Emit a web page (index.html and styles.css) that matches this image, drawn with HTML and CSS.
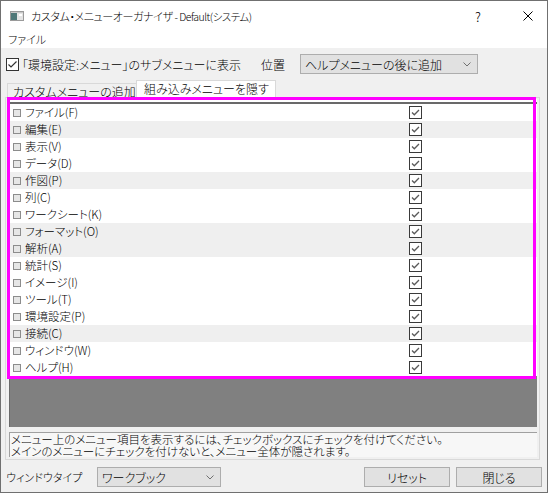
FILE: index.html
```html
<!DOCTYPE html>
<html lang="ja">
<head>
<meta charset="utf-8">
<title>カスタム・メニューオーガナイザ</title>
<link rel="stylesheet" href="styles.css">
</head>
<body>
<div class="window">
  <div class="titlebar">
    <svg class="app-icon" width="14" height="10" viewBox="0 0 14 10">
      <rect x="0.5" y="0.5" width="13" height="9" fill="#e4e4e4" stroke="#9a9a9a"/>
      <rect x="1" y="2" width="6" height="7" fill="#4f7878"/>
      <rect x="1" y="1" width="12" height="1" fill="#c8c8c8"/>
      <rect x="9" y="3" width="3" height="2" fill="#ffffff"/>
    </svg>
    <span class="title">カスタム・メニューオーガナイザ<span class="title-sub"> - Default(システム)</span></span>
    <span class="cap-btn help">?</span>
    <span class="cap-btn close">
      <svg width="10" height="10" viewBox="0 0 10 10"><path d="M0.5 0.5 L9.5 9.5 M9.5 0.5 L0.5 9.5" stroke="#000" stroke-width="1"/></svg>
    </span>
  </div>
  <div class="menubar"><span class="menu-item">ファイル</span></div>
  <div class="options">
    <span class="cb">
      <svg width="11" height="11" viewBox="0 0 11 11"><path d="M1.5 5.5 L4 8 L9.5 2.5" fill="none" stroke="#333" stroke-width="1.2"/></svg>
    </span>
    <span class="opt-label">「環境設定:メニュー」のサブメニューに表示</span>
    <span class="pos-label">位置</span>
    <div class="select select-pos">
      <span>ヘルプメニューの後に追加</span>
      <svg class="chev" width="8" height="5" viewBox="0 0 8 5"><path d="M0.5 0.5 L4 4 L7.5 0.5" fill="none" stroke="#707070" stroke-width="1"/></svg>
    </div>
  </div>
  <div class="tabs">
    <div class="tab">カスタムメニューの追加</div>
    <div class="tab active">組み込みメニューを隠す</div>
  </div>
  <div class="panel">
    <div class="list">
      <div class="rows">
        <div class="row"><span class="mini"></span><span class="name">ファイル(F)</span><span class="cb"><svg width="11" height="11" viewBox="0 0 11 11"><path d="M2 5.5 L4.3 7.8 L9 3" fill="none" stroke="#5a5a5a" stroke-width="1.3"/></svg></span></div>
        <div class="row alt"><span class="mini"></span><span class="name">編集(E)</span><span class="cb"><svg width="11" height="11" viewBox="0 0 11 11"><path d="M2 5.5 L4.3 7.8 L9 3" fill="none" stroke="#5a5a5a" stroke-width="1.3"/></svg></span></div>
        <div class="row"><span class="mini"></span><span class="name">表示(V)</span><span class="cb"><svg width="11" height="11" viewBox="0 0 11 11"><path d="M2 5.5 L4.3 7.8 L9 3" fill="none" stroke="#5a5a5a" stroke-width="1.3"/></svg></span></div>
        <div class="row"><span class="mini"></span><span class="name">データ(D)</span><span class="cb"><svg width="11" height="11" viewBox="0 0 11 11"><path d="M2 5.5 L4.3 7.8 L9 3" fill="none" stroke="#5a5a5a" stroke-width="1.3"/></svg></span></div>
        <div class="row alt"><span class="mini"></span><span class="name">作図(P)</span><span class="cb"><svg width="11" height="11" viewBox="0 0 11 11"><path d="M2 5.5 L4.3 7.8 L9 3" fill="none" stroke="#5a5a5a" stroke-width="1.3"/></svg></span></div>
        <div class="row"><span class="mini"></span><span class="name">列(C)</span><span class="cb"><svg width="11" height="11" viewBox="0 0 11 11"><path d="M2 5.5 L4.3 7.8 L9 3" fill="none" stroke="#5a5a5a" stroke-width="1.3"/></svg></span></div>
        <div class="row"><span class="mini"></span><span class="name">ワークシート(K)</span><span class="cb"><svg width="11" height="11" viewBox="0 0 11 11"><path d="M2 5.5 L4.3 7.8 L9 3" fill="none" stroke="#5a5a5a" stroke-width="1.3"/></svg></span></div>
        <div class="row alt"><span class="mini"></span><span class="name">フォーマット(O)</span><span class="cb"><svg width="11" height="11" viewBox="0 0 11 11"><path d="M2 5.5 L4.3 7.8 L9 3" fill="none" stroke="#5a5a5a" stroke-width="1.3"/></svg></span></div>
        <div class="row alt"><span class="mini"></span><span class="name">解析(A)</span><span class="cb"><svg width="11" height="11" viewBox="0 0 11 11"><path d="M2 5.5 L4.3 7.8 L9 3" fill="none" stroke="#5a5a5a" stroke-width="1.3"/></svg></span></div>
        <div class="row"><span class="mini"></span><span class="name">統計(S)</span><span class="cb"><svg width="11" height="11" viewBox="0 0 11 11"><path d="M2 5.5 L4.3 7.8 L9 3" fill="none" stroke="#5a5a5a" stroke-width="1.3"/></svg></span></div>
        <div class="row"><span class="mini"></span><span class="name">イメージ(I)</span><span class="cb"><svg width="11" height="11" viewBox="0 0 11 11"><path d="M2 5.5 L4.3 7.8 L9 3" fill="none" stroke="#5a5a5a" stroke-width="1.3"/></svg></span></div>
        <div class="row"><span class="mini"></span><span class="name">ツール(T)</span><span class="cb"><svg width="11" height="11" viewBox="0 0 11 11"><path d="M2 5.5 L4.3 7.8 L9 3" fill="none" stroke="#5a5a5a" stroke-width="1.3"/></svg></span></div>
        <div class="row"><span class="mini"></span><span class="name">環境設定(P)</span><span class="cb"><svg width="11" height="11" viewBox="0 0 11 11"><path d="M2 5.5 L4.3 7.8 L9 3" fill="none" stroke="#5a5a5a" stroke-width="1.3"/></svg></span></div>
        <div class="row alt"><span class="mini"></span><span class="name">接続(C)</span><span class="cb"><svg width="11" height="11" viewBox="0 0 11 11"><path d="M2 5.5 L4.3 7.8 L9 3" fill="none" stroke="#5a5a5a" stroke-width="1.3"/></svg></span></div>
        <div class="row"><span class="mini"></span><span class="name">ウィンドウ(W)</span><span class="cb"><svg width="11" height="11" viewBox="0 0 11 11"><path d="M2 5.5 L4.3 7.8 L9 3" fill="none" stroke="#5a5a5a" stroke-width="1.3"/></svg></span></div>
        <div class="row"><span class="mini"></span><span class="name">ヘルプ(H)</span><span class="cb"><svg width="11" height="11" viewBox="0 0 11 11"><path d="M2 5.5 L4.3 7.8 L9 3" fill="none" stroke="#5a5a5a" stroke-width="1.3"/></svg></span></div>
      </div>
      <div class="highlight"></div>
    </div>
    <div class="hint">
      <div>メニュー上のメニュー項目を表示するには、チェックボックスにチェックを付けてください。</div>
      <div>メインのメニューにチェックを付けないと、メニュー全体が隠されます。</div>
    </div>
  </div>
  <div class="footer">
    <span class="wt-label">ウィンドウタイプ</span>
    <div class="select select-wt">
      <span>ワークブック</span>
      <svg class="chev" width="8" height="5" viewBox="0 0 8 5"><path d="M0.5 0.5 L4 4 L7.5 0.5" fill="none" stroke="#707070" stroke-width="1"/></svg>
    </div>
    <span class="spacer"></span>
    <button class="btn">リセット</button>
    <button class="btn">閉じる</button>
  </div>
</div>
</body>
</html>
```

FILE: styles.css
```css
* { box-sizing: border-box; }

body {
  margin: 0;
  font-family: "Noto Sans CJK JP", "Noto Sans", sans-serif;
  font-size: 12px;
  font-weight: 300;
  color: #000;
  font-feature-settings: "palt";
}

.window {
  width: 548px;
  height: 493px;
  border: 1px solid #707070;
  background: #f0f0f0;
  display: flex;
  flex-direction: column;
  overflow: hidden;
}

.titlebar {
  height: 30px;
  flex: 0 0 30px;
  background: #fff;
  display: flex;
  align-items: center;
}

.app-icon { margin-left: 9px; flex: 0 0 auto; }

.title {
  margin-left: 7px;
  flex: 1;
  font-size: 11px;
  letter-spacing: -0.4px;
  white-space: nowrap;
}

.title-sub {
  font-size: 10.5px;
  letter-spacing: -0.5px;
}

.cap-btn {
  width: 46px;
  height: 30px;
  display: flex;
  align-items: center;
  justify-content: center;
}

.help { font-size: 13px; padding-top: 1px; }
.close { padding-left: 8px; }

.menubar {
  height: 17px;
  flex: 0 0 17px;
  background: #fff;
  font-size: 11px;
  line-height: 17px;
  padding-left: 7px;
}

.options {
  height: 31px;
  flex: 0 0 31px;
  display: flex;
  align-items: center;
  padding-left: 5px;
  padding-top: 1px;
}

.cb {
  width: 13px;
  height: 13px;
  flex: 0 0 13px;
  border: 1px solid #333;
  background: #fff;
  display: flex;
  align-items: center;
  justify-content: center;
}

.opt-label {
  margin-left: 3px;
  width: 239px;
  white-space: nowrap;
}

.pos-label { width: 39px; }

.select {
  height: 20px;
  border: 1px solid #adadad;
  background: #e1e1e1;
  display: flex;
  align-items: center;
  justify-content: space-between;
  padding: 0 6px 0 4px;
  white-space: nowrap;
}

.select-pos { width: 178px; }

.tabs {
  height: 18px;
  flex: 0 0 18px;
  display: flex;
  align-items: flex-end;
  padding-left: 6px;
}

.tab {
  height: 14px;
  width: 130px;
  border: 1px solid #d9d9d9;
  border-bottom: none;
  background: #f0f0f0;
  line-height: 16px;
  padding-left: 5px;
  white-space: nowrap;
}

.tab.active {
  height: 17px;
  width: 140px;
  margin-left: -1px;
  background: #fff;
  line-height: 16px;
  padding-left: 7px;
}

.panel {
  margin-left: 4px;
  width: 535px;
  height: 363px;
  flex: 0 0 363px;
  border: 1px solid #d9d9d9;
  padding: 1px 0 2px 3px;
}

.list {
  position: relative;
  width: 528px;
  height: 328px;
  background: #808080;
  border-left: 1px solid #6a6a6a;
}

.rows {
  background: #fff;
  padding-top: 3px;
}

.rows::before {
  content: "";
  display: block;
  height: 2px;
  background: #696969;
}

.row {
  height: 17px;
  display: flex;
  align-items: center;
  padding-left: 3px;
  background: #fff;
}

.row.alt { background: #efefef; }

.mini {
  width: 8px;
  height: 8px;
  flex: 0 0 8px;
  border: 1px solid #8c8c8c;
  background: #e6e6e6;
  margin-right: 4px;
}

.name {
  flex: 0 0 384px;
  font-size: 11.5px;
  white-space: nowrap;
  line-height: 17px;
}

.row .cb { border-color: #3a3a3a; }

.highlight {
  position: absolute;
  left: -3px;
  top: -2px;
  width: 529px;
  height: 282px;
  border: 3px solid #ff00ff;
  pointer-events: none;
}

.hint {
  margin-top: 5px;
  width: 528px;
  height: 25px;
  border-top: 1px solid #a0a0a0;
  border-left: 1px solid #a0a0a0;
  background: #f7f7f7;
  font-size: 11.5px;
  line-height: 12px;
  padding-left: 1px;
  white-space: nowrap;
}

.footer {
  height: 20px;
  flex: 0 0 20px;
  margin-top: 7px;
  display: flex;
  align-items: center;
  padding: 0 5px;
}

.wt-label { width: 91px; font-size: 11px; white-space: nowrap; }

.select-wt { width: 124px; }

.spacer { flex: 1; }

.btn {
  width: 86px;
  height: 20px;
  margin-left: 6px;
  border: 1px solid #adadad;
  background: #e1e1e1;
  font-family: inherit;
  font-size: 12px;
  font-weight: 300;
  font-feature-settings: "palt";
  padding: 0;
  color: #000;
}
```
